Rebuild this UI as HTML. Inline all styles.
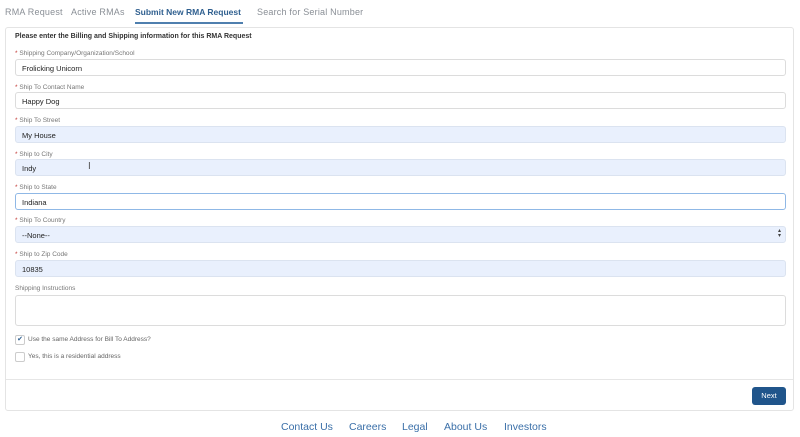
<!DOCTYPE html><html><head><style>
body{margin:0;width:800px;height:437px;background:#fff;font-family:"Liberation Sans",sans-serif;position:relative;overflow:hidden}
.a{position:absolute}
.tab{top:7px;font-size:9px;color:#8a8f96;letter-spacing:.2px}
.card{left:5px;top:27px;width:789px;height:384px;border:1px solid #e4e4e4;border-radius:3px;box-sizing:border-box}
.lbl{left:15px;font-size:6.5px;color:#777}
.lbl b{color:#c23934;font-weight:normal}
.in{left:15px;width:771px;height:17px;border:1px solid #dcdcdc;border-radius:3px;box-sizing:border-box;font-size:7.5px;color:#222;padding:4px 0 0 6px;background:#fff}
.bl{background:#e9f0fd;border-color:#dbe3f0}
.ft{top:421px;font-size:10.5px;color:#3a6fa8}
.cb{left:15px;width:8px;height:8px;border:1px solid #ccc;border-radius:2px}
.ct{left:28px;font-size:6.5px;color:#666}
</style></head><body>
<div class="a tab" style="left:5px">RMA Request</div>
<div class="a tab" style="left:71px">Active RMAs</div>
<div class="a tab" style="left:135px;color:#2f5f8f;font-weight:bold;font-size:8.5px;letter-spacing:0;top:7px">Submit New RMA Request</div>
<div class="a" style="left:135px;top:22px;width:108px;height:2px;background:#4f7fae"></div>
<div class="a tab" style="left:257px">Search for Serial Number</div>
<div class="a card"></div>
<div class="a" style="left:15px;top:33px;font-size:7px;font-weight:bold;color:#333">Please enter the Billing and Shipping information for this RMA Request</div>
<div class="a lbl" style="top:50px"><b>* </b>Shipping Company/Organization/School</div>
<div class="a in" style="top:59px">Frolicking Unicorn</div>
<div class="a lbl" style="top:84px"><b>* </b>Ship To Contact Name</div>
<div class="a in" style="top:92px">Happy Dog</div>
<div class="a lbl" style="top:117px"><b>* </b>Ship To Street</div>
<div class="a in bl" style="top:126px">My House</div>
<div class="a lbl" style="top:151px"><b>* </b>Ship to City</div>
<div class="a in bl" style="top:159px">Indy</div>
<div class="a" style="left:88px;top:161px;font-size:10px;color:#555">I</div>
<div class="a lbl" style="top:184px"><b>* </b>Ship to State</div>
<div class="a in" style="top:193px;border-color:#8fb8e6">Indiana</div>
<div class="a lbl" style="top:217px"><b>* </b>Ship To Country</div>
<div class="a in bl" style="top:226px">--None--<span style="position:absolute;right:4px;top:2px;font-size:6px;line-height:5px;color:#444">▴<br>▾</span></div>
<div class="a lbl" style="top:251px"><b>* </b>Ship to Zip Code</div>
<div class="a in bl" style="top:260px">10835</div>
<div class="a lbl" style="top:285px">Shipping Instructions</div>
<div class="a in" style="top:295px;height:31px"></div>
<div class="a cb" style="top:335px;font-size:7px;line-height:8px;text-align:center;color:#2f5f8f">✔</div>
<div class="a ct" style="top:336px">Use the same Address for Bill To Address?</div>
<div class="a cb" style="top:352px"></div>
<div class="a ct" style="top:353px">Yes, this is a residential address</div>
<div class="a" style="left:6px;top:379px;width:787px;height:1px;background:#e6e6e6"></div>
<div class="a" style="left:752px;top:387px;width:34px;height:18px;background:#20558b;border-radius:3px;color:#fff;font-size:7.5px;text-align:center;line-height:18px">Next</div>
<div class="a ft" style="left:281px">Contact Us</div>
<div class="a ft" style="left:349px">Careers</div>
<div class="a ft" style="left:402px">Legal</div>
<div class="a ft" style="left:444px">About Us</div>
<div class="a ft" style="left:504px">Investors</div>
</body></html>
